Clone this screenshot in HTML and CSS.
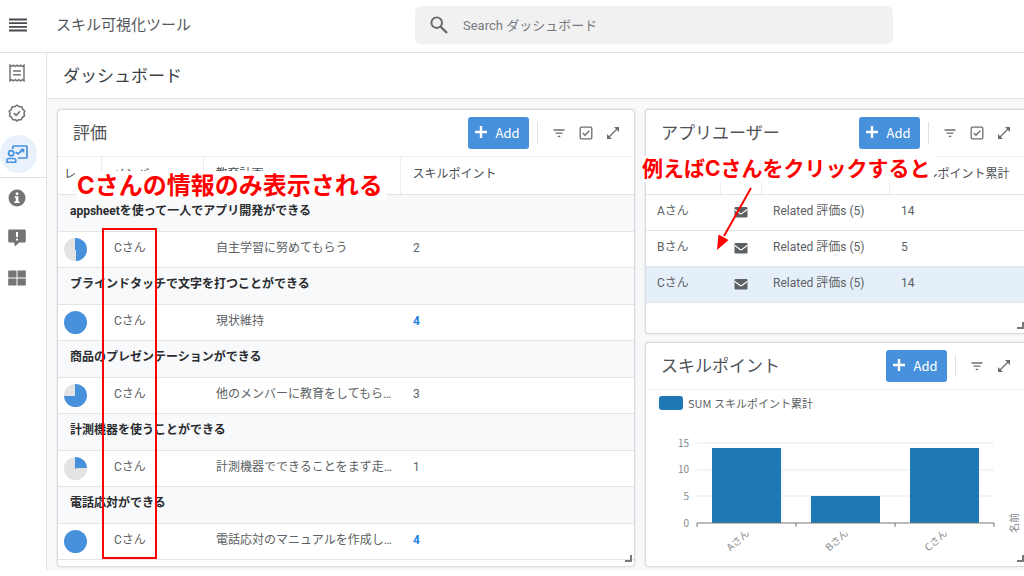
FILE: index.html
```html
<!DOCTYPE html>
<html lang="ja">
<head>
<meta charset="utf-8">
<meta name="viewport" content="width=device-width, initial-scale=1">
<title>スキル可視化ツール</title>
<link rel="stylesheet" href="styles.css">
</head>
<body>
<svg class="defs" aria-hidden="true">
  <symbol id="i-plus" viewBox="0 0 12 12"><path d="M6 0v12M0 6h12" stroke="currentColor" stroke-width="2.4"/></symbol>
  <symbol id="i-filter" viewBox="0 0 14 14"><path d="M1.500 4h11M3.500 7.200h7M5.700 10.400h2.600" stroke="currentColor" stroke-width="1.300"/></symbol>
  <symbol id="i-check" viewBox="0 0 14 14"><rect x="1.200" y="1.200" width="11.600" height="11.600" rx="1" fill="none" stroke="currentColor" stroke-width="1.300"/><path d="M3.800 7l2.200 2.300 4.300-4.600" fill="none" stroke="currentColor" stroke-width="1.400"/></symbol>
  <symbol id="i-expand" viewBox="0 0 14 14"><path d="M2.500 11.500l9-9" stroke="currentColor" stroke-width="1.300"/><path d="M8 1H13v5zM1 8V13h5z" fill="currentColor"/></symbol>
  <symbol id="i-mail" viewBox="0 0 14 12"><rect x="0.500" y="1" width="13" height="10.500" rx="1.200" fill="currentColor"/><path d="M0.500 3.200L5.800 7.200q1.200.8 2.400 0L13.500 3.200" fill="none" stroke="#fff" stroke-width="1.100"/></symbol>
</svg>

<header class="topbar">
  <div class="brand">
    <button class="icon-btn menu" type="button" aria-label="メニュー">
      <svg width="18" height="14" viewBox="0 0 18 14"><path d="M0 1.500h18M0 5.200h18M0 8.900h18M0 12.500h18" stroke="#484b4f" stroke-width="1.800"/></svg>
    </button>
    <span class="brand-name">スキル可視化ツール</span>
  </div>
  <label class="search">
    <svg width="18" height="18" viewBox="0 0 18 18"><circle cx="6.700" cy="6.700" r="5.300" fill="none" stroke="#63666a" stroke-width="1.900"/><path d="M10.700 10.700l6.300 6.300" stroke="#63666a" stroke-width="2.300"/></svg>
    <input type="search" aria-label="検索" placeholder="Search ダッシュボード">
  </label>
</header>

<div class="shell">
  <nav class="sidebar" aria-label="ナビゲーション">
    <div class="nav-group">
      <a class="nav-item" href="#" aria-label="一覧"><svg width="18" height="20" viewBox="0 0 18 20"><path d="M2 2.200l1.600 1.200 1.800-1.200 1.800 1.200L9 2.200l1.800 1.200 1.800-1.200 1.800 1.200L16 2.200v15.600l-1.600-1.200-1.800 1.200-1.800-1.200L9 17.800l-1.800-1.200-1.800 1.200-1.800-1.200L2 17.800z" fill="none" stroke="currentColor" stroke-width="1.500"/><path d="M5 8h8M5 11.800h8" stroke="currentColor" stroke-width="1.400"/></svg></a>
      <a class="nav-item" href="#" aria-label="評価"><svg width="18" height="18" viewBox="0 0 18 18"><path d="M9 1.200l2.200 1.500 2.700.1.800 2.500 2.100 1.700L16 9.500l.5 2.400-2.200 1.600-1 2.300-2.500-.1L9 17l-1.800-1.300-2.500.1-1-2.300-2.200-1.600L2 9.500 1.200 7l2.100-1.700.8-2.500 2.700-.1z" fill="none" stroke="currentColor" stroke-width="1.600" stroke-linejoin="round"/><path d="M5.800 9.200l2.300 2.200 4-4.200" fill="none" stroke="currentColor" stroke-width="1.600"/></svg></a>
      <a class="nav-item active" href="#" aria-label="ダッシュボード" aria-current="page"><svg width="22" height="19" viewBox="0 0 22 19"><path d="M6.800 4V1.700Q6.800 1 7.500 1h12.800q.7 0 .7.700v10.600q0 .7-.7.700H12" fill="none" stroke="currentColor" stroke-width="1.700"/><circle cx="5.200" cy="8.200" r="2.600" fill="none" stroke="currentColor" stroke-width="1.700"/><path d="M1 17.200v-2q0-1.700 2-1.700h4.700q2 0 2 1.700v2z" fill="none" stroke="currentColor" stroke-width="1.600"/><path d="M9.500 7l2.500 2 4.500-4M14.500 4.500h3v3" fill="none" stroke="currentColor" stroke-width="1.700"/></svg></a>
    </div>
    <div class="nav-group">
      <a class="nav-item" href="#" aria-label="情報"><svg width="18" height="18" viewBox="0 0 18 18"><circle cx="9" cy="9" r="8.500" fill="currentColor"/><path d="M7.800 3.500h2.500V6H7.800zM6.800 7.300h3.500v5h1.200V14H6.500v-1.700h1.300V9h-1z" fill="#fff"/></svg></a>
      <a class="nav-item" href="#" aria-label="フィードバック"><svg width="18" height="18" viewBox="0 0 18 18"><path d="M1.500.5h15q1.300 0 1.300 1.300v10.400q0 1.300-1.300 1.300h-5.300L7 17.500l-1-4H1.500q-1.300 0-1.300-1.300V1.800Q.2.500 1.500.5z" fill="currentColor"/><path d="M9 3v5M9 9.500v2" stroke="#fff" stroke-width="2"/></svg></a>
      <a class="nav-item" href="#" aria-label="アプリ一覧"><svg width="18" height="16" viewBox="0 0 18 16"><path d="M.2.500h8.300v7H.2zM9.500.500h8.300v7H9.500zM.2 8.500h8.300v7H.2zM9.500 8.500h8.300v7H9.500z" fill="currentColor"/></svg></a>
    </div>
  </nav>

  <main class="main">
    <h1 class="page-title">ダッシュボード</h1>
    <div class="board">
      <section class="panel">
        <div class="panel-head">
          <h2>評価</h2>
          <button class="add" type="button"><svg width="12" height="12"><use href="#i-plus"/></svg>Add</button>
          <div class="tools">
            <button class="icon-btn" type="button" aria-label="絞り込み"><svg width="14" height="14"><use href="#i-filter"/></svg></button>
            <button class="icon-btn" type="button" aria-label="選択"><svg width="14" height="14"><use href="#i-check"/></svg></button>
            <button class="icon-btn" type="button" aria-label="拡大"><svg width="14" height="14"><use href="#i-expand"/></svg></button>
          </div>
        </div>
        <table class="ratings">
          <colgroup><col class="c-level"><col class="c-member"><col class="c-plan"><col></colgroup>
          <thead><tr><th>レ…</th><th>メンバー</th><th>教育計画</th><th>スキルポイント</th></tr></thead>
          <tbody>
            <tr class="group"><th colspan="4">appsheetを使って一人でアプリ開発ができる</th></tr>
            <tr><td><span class="pie half"></span></td><td>Cさん</td><td>自主学習に努めてもらう</td><td>2</td></tr>
            <tr class="group"><th colspan="4">ブラインドタッチで文字を打つことができる</th></tr>
            <tr><td><span class="pie full"></span></td><td>Cさん</td><td>現状維持</td><td class="top">4</td></tr>
            <tr class="group"><th colspan="4">商品のプレゼンテーションができる</th></tr>
            <tr><td><span class="pie most"></span></td><td>Cさん</td><td>他のメンバーに教育をしてもら…</td><td>3</td></tr>
            <tr class="group"><th colspan="4">計測機器を使うことができる</th></tr>
            <tr><td><span class="pie quarter"></span></td><td>Cさん</td><td>計測機器でできることをまず走…</td><td>1</td></tr>
            <tr class="group"><th colspan="4">電話応対ができる</th></tr>
            <tr><td><span class="pie full"></span></td><td>Cさん</td><td>電話応対のマニュアルを作成し…</td><td class="top">4</td></tr>
          </tbody>
        </table>
        <span class="grip"></span>
        <span class="frame"></span>
        <p class="note note-left">Cさんの情報のみ表示される</p>
      </section>

      <div class="stack">
        <section class="panel open">
          <div class="panel-head">
            <h2>アプリユーザー</h2>
            <button class="add" type="button"><svg width="12" height="12"><use href="#i-plus"/></svg>Add</button>
            <div class="tools">
              <button class="icon-btn" type="button" aria-label="絞り込み"><svg width="14" height="14"><use href="#i-filter"/></svg></button>
              <button class="icon-btn" type="button" aria-label="選択"><svg width="14" height="14"><use href="#i-check"/></svg></button>
              <button class="icon-btn" type="button" aria-label="拡大"><svg width="14" height="14"><use href="#i-expand"/></svg></button>
            </div>
          </div>
          <table class="users">
            <colgroup><col class="c-name"><col class="c-mail"><col class="c-related"><col></colgroup>
            <thead><tr><th></th><th></th><th></th><th>スキルポイント累計</th></tr></thead>
            <tbody>
              <tr><td>Aさん</td><td><svg width="14" height="12"><use href="#i-mail"/></svg></td><td>Related 評価s (5)</td><td>14</td></tr>
              <tr><td>Bさん</td><td><svg width="14" height="12"><use href="#i-mail"/></svg></td><td>Related 評価s (5)</td><td>5</td></tr>
              <tr class="selected"><td>Cさん</td><td><svg width="14" height="12"><use href="#i-mail"/></svg></td><td>Related 評価s (5)</td><td>14</td></tr>
            </tbody>
          </table>
          <span class="grip"></span>
          <p class="note note-right">例えばCさんをクリックすると</p>
          <svg class="arrow" width="40" height="66" viewBox="0 0 40 66"><path d="M35 2L8 50" stroke="#f00" stroke-width="2"/><path d="M1 64L2.500 48.500L12.500 54z" fill="#f00"/></svg>
        </section>

        <section class="panel open">
          <div class="panel-head">
            <h2>スキルポイント</h2>
            <button class="add" type="button"><svg width="12" height="12"><use href="#i-plus"/></svg>Add</button>
            <div class="tools">
              <button class="icon-btn" type="button" aria-label="絞り込み"><svg width="14" height="14"><use href="#i-filter"/></svg></button>
              <button class="icon-btn" type="button" aria-label="拡大"><svg width="14" height="14"><use href="#i-expand"/></svg></button>
            </div>
          </div>
          <div class="legend"><span class="swatch"></span>SUM スキルポイント累計</div>
          <svg class="chart" viewBox="0 0 378 145" role="img" aria-label="SUM スキルポイント累計">
            <path class="gridline" d="M51 28h297M51 55h297M51 81h297"/>
            <rect class="bar" x="66" y="33" width="69" height="75"/>
            <rect class="bar" x="165" y="81" width="69" height="27"/>
            <rect class="bar" x="264" y="33" width="69" height="75"/>
            <path class="axis" d="M51 112v-4h297v4M150 108v4M249 108v4"/>
            <g class="ticks">
              <text x="43" y="32">15</text><text x="43" y="58">10</text><text x="43" y="85">5</text><text x="43" y="112">0</text>
              <text transform="translate(104 119) rotate(-42)">Aさん</text>
              <text transform="translate(203 119) rotate(-42)">Bさん</text>
              <text transform="translate(302 119) rotate(-42)">Cさん</text>
              <text transform="translate(372 98) rotate(-90)">名前</text>
            </g>
          </svg>
          <span class="grip"></span>
        </section>
      </div>
    </div>
  </main>
</div>
</body>
</html>
```

FILE: styles.css
```css
* { box-sizing: border-box; }

body {
  margin: 0;
  min-height: 100vh;
  display: flex;
  flex-direction: column;
  padding-bottom: 5px;
  overflow-x: hidden;
  background: #fff;
  color: #5c5f63;
  font-family: Roboto, "Noto Sans CJK JP", sans-serif;
  font-size: 12px;
}

h1, h2, p { margin: 0; font-weight: 400; }
svg { display: block; flex: none; }
.defs { position: absolute; width: 0; height: 0; }
button { font: inherit; cursor: pointer; }
.icon-btn { padding: 0; border: 0; background: none; color: #6b6e72; }

/* top bar */
.topbar {
  display: grid;
  grid-template-columns: 415fr 478fr 131fr;
  align-items: center;
  height: 53px;
  padding-bottom: 2px;
  border-bottom: 1px solid #e0e2e4;
}
.brand { display: flex; align-items: center; gap: 29px; padding-left: 9px; }
.brand-name { font-size: 15px; line-height: 20px; color: #55585c; }
.search {
  display: flex;
  align-items: center;
  gap: 15px;
  height: 38px;
  padding: 0 15px;
  border-radius: 6px;
  background: #f1f1f1;
}
.search input {
  flex: 1;
  min-width: 0;
  padding: 0;
  border: 0;
  outline: 0;
  background: none;
  font: inherit;
  font-size: 13px;
  color: #55585c;
}
.search input::placeholder { color: #777a7e; opacity: 1; }

/* side navigation */
.shell { flex: 1; display: flex; }
.sidebar { width: 47px; border-right: 1px solid #e0e2e4; }
.nav-group { padding-bottom: 4px; }
.nav-group + .nav-group { border-top: 1px solid #e0e2e4; }
.nav-item {
  display: flex;
  align-items: center;
  justify-content: center;
  width: 34px;
  height: 40px;
  color: #747474;
}
.nav-item.active {
  width: 37px;
  height: 38px;
  margin: 2px 0 0;
  padding-right: 3px;
  border-radius: 50%;
  background: #e8f1fc;
  color: #4790dc;
}

/* dashboard */
.main { flex: 1; min-width: 0; display: flex; flex-direction: column; background: #f8f9fb; }
.page-title {
  height: 46px;
  padding-left: 16px;
  border-bottom: 1px solid #e0e2e4;
  background: #fff;
  color: #3c3f43;
  font-size: 17px;
  line-height: 46px;
}
.board {
  flex: 1;
  display: grid;
  grid-template-columns: 578fr 379fr;
  gap: 10px;
  padding: 10px 0 4px 10px;
}
.stack { display: grid; grid-template-rows: 1fr 1fr; gap: 8px; min-width: 0; }
.panel {
  position: relative;
  min-width: 0;
  border: 1px solid #d9dbde;
  border-radius: 4px;
  background: #fff;
  box-shadow: 0 0 2px #d0d2d5;
}
.panel.open { border-right: 0; border-radius: 4px 0 0 4px; }

.panel-head {
  display: flex;
  align-items: center;
  height: 47px;
  padding: 0 14px 0 15px;
  border-bottom: 1px solid #f0f0f2;
}
.panel.open .panel-head { padding-right: 13px; }
.panel-head h2 { flex: 1; font-size: 17px; line-height: 24px; color: #505357; white-space: nowrap; }
.add {
  display: flex;
  align-items: center;
  justify-content: center;
  gap: 8px;
  width: 61px;
  height: 32px;
  padding: 0 2px 2px 0;
  border: 0;
  border-radius: 3px;
  background: #4790dc;
  color: #fff;
  font-family: "Noto Sans CJK JP", sans-serif;
  font-size: 13px;
}
.tools {
  display: flex;
  align-items: center;
  gap: 13px;
  height: 22px;
  margin-left: 8px;
  padding-left: 14px;
  border-left: 1px solid #dfe0e2;
}

/* tables */
table { width: 100%; table-layout: fixed; border-collapse: collapse; line-height: 18px; }
th, td {
  height: 36px;
  padding: 0 0 3px 12px;
  border-bottom: 1px solid #e2e4e6;
  overflow: hidden;
  text-align: left;
  text-overflow: ellipsis;
  white-space: nowrap;
}
thead th { height: 37px; font-weight: 400; color: #4c4f53; }
thead th + th { border-left: 1px solid #ececee; }
.c-level { width: 43px; }
.c-member { width: 102px; }
.c-plan { width: 197px; }
.ratings td { padding-left: 13px; }
.ratings th:first-child, .ratings td:first-child { padding-left: 6px; }
.ratings td:first-child { padding-bottom: 0; }
.ratings .group th {
  height: 37px;
  padding-left: 12px;
  background: #f8f9fb;
  color: #2a2c2f;
  font-weight: 700;
}
.ratings .top { color: #1e80dc; font-weight: 700; }
.pie { display: block; width: 23px; height: 23px; border-radius: 50%; background: #4790dc; }
.pie.half { background: conic-gradient(#4790dc 50%, #e3e3e3 0); }
.pie.most { background: conic-gradient(#4790dc 75%, #e3e3e3 0); }
.pie.quarter { background: conic-gradient(#4790dc 25%, #e3e3e3 0); }

.c-name { width: 74px; }
.c-mail { width: 41px; }
.c-related { width: 128px; }
.users .selected { background: #e5eff9; }
.users td:first-child { padding-left: 11px; }
.users td:nth-child(2) { padding: 0 0 0 14px; }

/* chart */
.legend {
  display: flex;
  align-items: center;
  gap: 5px;
  height: 25px;
  padding-left: 13px;
  font-family: "Noto Sans CJK JP", sans-serif;
  font-size: 11px;
}
.swatch { width: 24px; height: 14px; border-radius: 3px; background: #1f77b4; }
.chart { width: 100%; height: auto; }
.gridline { fill: none; stroke: #e6e9f3; }
.bar { fill: #1f77b4; }
.axis { fill: none; stroke: #777; }
.ticks { font-family: "Noto Sans CJK JP", sans-serif; font-size: 10px; fill: #85888c; text-anchor: end; }

.grip {
  position: absolute;
  right: 2px;
  bottom: 4px;
  width: 7px;
  height: 7px;
  border: solid #777;
  border-width: 0 2px 2px 0;
}
.open .grip { right: 0; }

/* annotations */
.note {
  position: absolute;
  background: #fff;
  color: #f00;
  font-family: Inter, "Noto Sans CJK JP", sans-serif;
  font-weight: 700;
  white-space: nowrap;
}
.note-left { top: 61px; left: 19px; padding-right: 3px; font-size: 24px; line-height: 29px; }
.note-right { top: 46px; left: -4px; padding-right: 3px; font-size: 21px; line-height: 26px; }
.frame { position: absolute; top: 118px; left: 44px; width: 55px; height: 331px; border: 2px solid #f00; }
.arrow { position: absolute; top: 76px; left: 70px; }
```
